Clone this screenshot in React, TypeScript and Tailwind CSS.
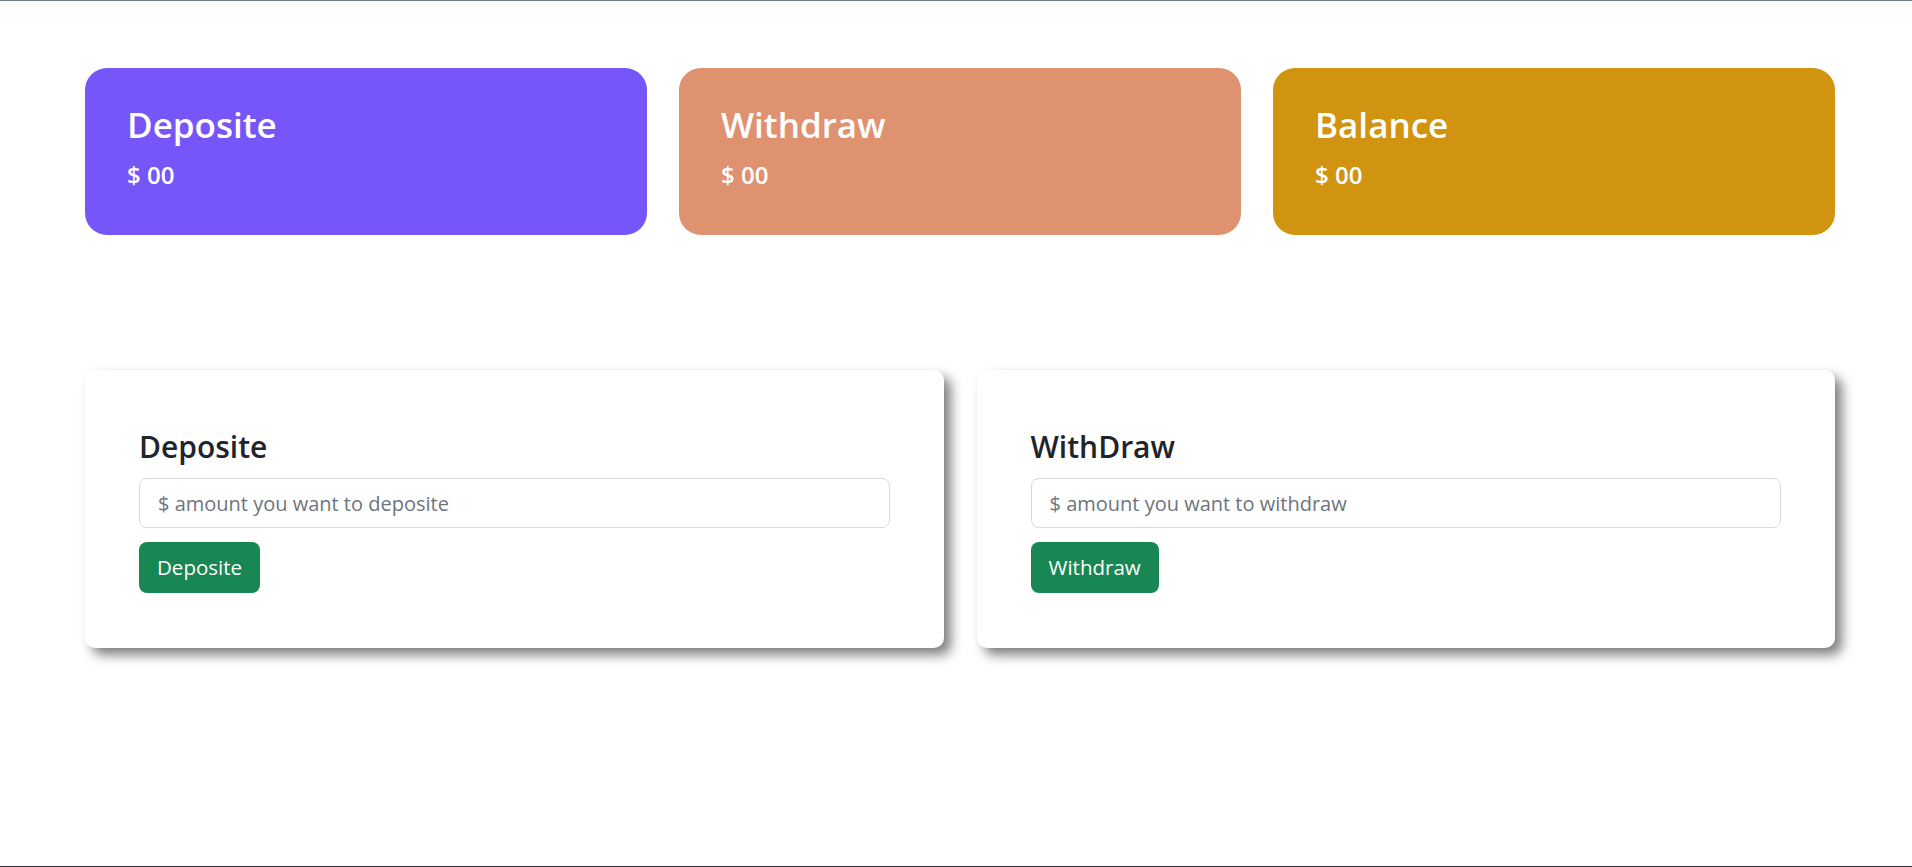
import React from "react";

const stats = [
    { title: "Deposite", amount: "00", bg: "bg-[#7756f9]" },
    { title: "Withdraw", amount: "00", bg: "bg-[#df9270]" },
    { title: "Balance", amount: "00", bg: "bg-[#d19411]" },
];

function StatCard({ title, amount, bg }: { title: string; amount: string; bg: string }) {
    return (
        <div className={`${bg} h-[167px] rounded-[22px] pl-[42px] pt-[36px] text-white`}>
            <h1 className="text-[35px] leading-[1.2] font-semibold">{title}</h1>
            <h4 className="mt-[15px] text-[24px] leading-[1.2] font-semibold">$ {amount}</h4>
        </div>
    );
}

function ActionCard({ title, placeholder, button }: { title: string; placeholder: string; button: string }) {
    const [value, setValue] = React.useState("");
    return (
        <div className="bg-white rounded-[10px] pt-[59px] px-[54px] pb-[55px] shadow-[7px_7px_12px_rgba(0,0,0,0.5)]">
            <h3 className="text-[30px] leading-[1.2] font-semibold text-[#212529]">{title}</h3>
            <input
                type="number"
                value={value}
                onChange={e => setValue(e.target.value)}
                placeholder={placeholder}
                className="mt-[13px] block w-full h-[50px] border border-[#d6d9dd] rounded-[8px] px-[18px] text-[20px] text-[#212529] placeholder:text-[#6c757d] outline-none"
            />
            <button className="mt-[14px] h-[51px] px-[18px] rounded-[8px] bg-[#198754] text-white text-[20.5px]">
                {button}
            </button>
        </div>
    );
}

export default function App() {
    return (
        <div
            className="h-[867px] bg-white border-t border-t-[#6b7b86] border-b border-b-[#1e2d3b]"
            style={{ fontFamily: '"Open Sans", "Noto Sans", sans-serif' }}
        >
            <div className="pl-[85px] pr-[77px] pt-[67px]">
                <div className="grid grid-cols-3 gap-[32px]">
                    {stats.map(s => (
                        <StatCard key={s.title} {...s} />
                    ))}
                </div>
                <div className="grid grid-cols-2 gap-[33px] mt-[135px]">
                    <ActionCard title="Deposite" placeholder="$ amount you want to deposite" button="Deposite" />
                    <ActionCard title="WithDraw" placeholder="$ amount you want to withdraw" button="Withdraw" />
                </div>
            </div>
        </div>
    );
}
